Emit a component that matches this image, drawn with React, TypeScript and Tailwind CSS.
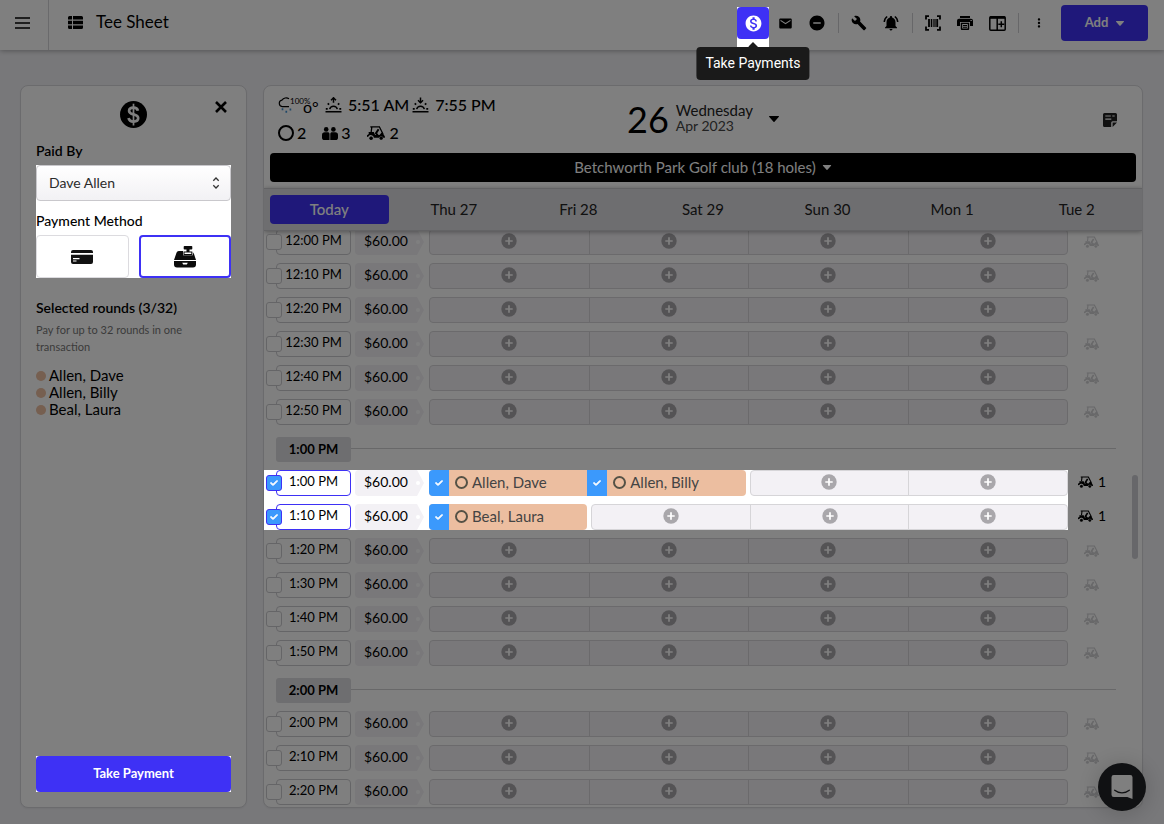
import { useState } from "react";
import type { ReactNode } from "react";
import {
  MdEmail,
  MdDoNotDisturbOn,
  MdBuild,
  MdNotificationsActive,
  MdMoreVert,
  MdMonetizationOn,
} from "react-icons/md";
import { FaCheck } from "react-icons/fa6";

type IconProps = { className?: string };

function ListIcon({ className }: IconProps) {
  return (
    <svg viewBox="0 0 15 13" className={className} fill="currentColor" aria-hidden="true">
      <path d="M1.5 0H4v3.6H0V1.5A1.5 1.5 0 0 1 1.5 0ZM5 0h8.500A1.500 1.500 0 0 1 15 1.500V3.600H5ZM0 4.700h4v3.600H0ZM5 4.700h10v3.600H5ZM0 9.400h4V13H1.500A1.500 1.500 0 0 1 0 11.500ZM5 9.400h10v2.100a1.500 1.500 0 0 1-1.500 1.500H5Z" />
    </svg>
  );
}

function CloseIcon({ className }: IconProps) {
  return (
    <svg viewBox="0 0 12 12" className={className} fill="none" stroke="#000" strokeWidth="2.600" aria-hidden="true">
      <path d="m1 1 10 10M11 1 1 11" />
    </svg>
  );
}

function BarcodeIcon({ className }: IconProps) {
  return (
    <svg viewBox="0 0 16 16" className={className} fill="none" stroke="currentColor" aria-hidden="true">
      <path strokeWidth="1.800" d="M1 4.500V1.200h3M12 1.200h3v3.300M15 11.500v3.300h-3M4 14.800H1v-3.300" />
      <path strokeWidth="1.800" d="M4 4v8M12.200 4v8" />
      <path strokeWidth="1.200" d="M6.400 4v8M10 4v8" />
      <path strokeWidth="0.900" d="M8.200 4v8" />
    </svg>
  );
}

function PrinterIcon({ className }: IconProps) {
  return (
    <svg viewBox="0 0 16 14" className={className} aria-hidden="true">
      <g fill="currentColor">
        <path d="M3 0h10v2H3z" />
        <path fillRule="evenodd" d="M2 2.800h12a2 2 0 0 1 2 2V10h-3V6H3v4H0V4.800a2 2 0 0 1 2-2Zm11.500 1.100v1.200h1.300V3.900Z" />
        <path fillRule="evenodd" d="M3.800 6.800h8.400V13a1 1 0 0 1-1 1H4.800a1 1 0 0 1-1-1Zm1.400 1.200v4.600h5.600V8Z" />
        <path d="M6 8.900h4v1H6zM6 10.700h4v1H6z" />
      </g>
    </svg>
  );
}

function ColumnPlusIcon({ className }: IconProps) {
  return (
    <svg viewBox="0 0 17 15" className={className} fill="none" stroke="currentColor" aria-hidden="true">
      <rect x="0.800" y="0.800" width="15.400" height="13.400" rx="1" strokeWidth="1.500" />
      <path strokeWidth="2.400" d="M1 1.600h15" />
      <path strokeWidth="1.500" d="M8.200 1v13M12.300 5.200v6M9.300 8.200h6" />
    </svg>
  );
}

function DollarBadge({ className }: IconProps) {
  return (
    <svg viewBox="0 0 27 27" className={className} aria-hidden="true">
      <circle cx="13.500" cy="13.500" r="13.500" fill="#000" />
      <path
        d="M17.900 9.700c-.5-2.100-2-3.100-4.400-3.100-2.600 0-4.400 1.300-4.400 3.300 0 4.500 9.100 2.500 9.100 7.200 0 2.200-1.900 3.500-4.700 3.500s-4.500-1.200-4.900-3.600"
        fill="none"
        stroke="#fff"
        strokeWidth="2.700"
      />
      <path d="M13.500 2.700v21.800" stroke="#fff" strokeWidth="1.700" />
    </svg>
  );
}

function CardIcon({ className }: IconProps) {
  return (
    <svg viewBox="0 0 22 14" className={className} aria-hidden="true">
      <path fill="#111" d="M2 0h18a2 2 0 0 1 2 2v1H0V2a2 2 0 0 1 2-2ZM0 4.800h22V12a2 2 0 0 1-2 2H2a2 2 0 0 1-2-2Z" />
      <path stroke="#fff" strokeWidth="1.200" d="M2 8.600h6.500M2 11h3.500" />
    </svg>
  );
}

function RegisterIcon({ className }: IconProps) {
  return (
    <svg viewBox="0 0 22 22" className={className} aria-hidden="true">
      <g fill="#0b0b0b">
        <path d="M10.500 0h7a.8.8 0 0 1 .8.800v2a.8.8 0 0 1-.8.800H15.500V6h-3V3.600h-2a.8.8 0 0 1-.8-.8v-2a.8.8 0 0 1 .8-.8Z" />
        <path fillRule="evenodd" d="M4.800 5H9v4.300h9.800V6l1.200 2 2 6H0L2.500 6.800A2.500 2.500 0 0 1 4.800 5Z" />
        <path fillRule="evenodd" d="M9.500 5.500h8.800v3.400H9.500Zm1 1v1.400h6.800V6.500Z" />
        <path fillRule="evenodd" d="M0 15h22v3.500a3 3 0 0 1-3 3H3a3 3 0 0 1-3-3Zm8.200 1.800 1 1.600h3.600l1-1.600Z" />
      </g>
    </svg>
  );
}

function CartIcon({ className }: IconProps) {
  return (
    <svg viewBox="0 0 18 14" className={className} fill="none" stroke="currentColor" aria-hidden="true">
      <path strokeWidth="1.300" d="M3.300.900H13M4.800 1.200 4.200 6M12.600 1.200 16 8" />
      <path strokeWidth="2" d="M11.600 3.300 9 7.300l2 2.500" />
      <path
        fill="currentColor"
        stroke="none"
        d="M1.600 6h5.200l1.300 2.900h4.400l1.900-2.200h1.200L17.900 10.500v1.200h-1.600a2.200 2.200 0 0 0-4.200 0H6.900A2.900 2.900 0 0 0 1.500 10.600L0 11V9.200l1.800-1.300Z"
      />
      <circle cx="4.100" cy="12.200" r="1.500" fill="currentColor" strokeWidth="0.600" />
      <circle cx="14.200" cy="12.200" r="1.400" fill="currentColor" strokeWidth="0.600" />
    </svg>
  );
}

function PeopleIcon({ className }: IconProps) {
  return (
    <svg viewBox="0 0 16 13" className={className} fill="currentColor" aria-hidden="true">
      <circle cx="4.200" cy="2.400" r="2.300" />
      <circle cx="11.400" cy="2.400" r="2.300" />
      <path d="M2.800 5.200h2.900c1 0 1.800.7 1.800 1.700V13H2.600A2.600 2.600 0 0 1 0 10.400V8a2.800 2.800 0 0 1 2.800-2.800ZM10 5.200h3.200A2.800 2.800 0 0 1 16 8v2.400A2.600 2.600 0 0 1 13.400 13H8.300V6.900c0-1 .7-1.700 1.700-1.700Z" />
    </svg>
  );
}

function SunIcon({ className, down = false }: IconProps & { down?: boolean }) {
  return (
    <svg viewBox="0 0 17 16" className={className} fill="none" stroke="currentColor" aria-hidden="true">
      <path strokeWidth="1.600" d="M.5 14.800h16" />
      <path strokeWidth="1.500" d="M4.700 12.200a3.900 3.900 0 0 1 7.600 0M8.500.5v5.200" />
      <path strokeWidth="1.500" d={down ? "M6 3.300 8.500 5.700 11 3.300" : "M6 3.200 8.500.9 11 3.200"} />
      <path strokeWidth="1.700" d="M.8 11.800h1.900M14.300 11.800h1.900M2.700 6.300l1.400 1.400M14.300 6.300l-1.400 1.400" />
    </svg>
  );
}

function RainCloud({ className }: IconProps) {
  return (
    <svg viewBox="0 0 18 17" className={className} fill="none" aria-hidden="true">
      <path
        stroke="currentColor"
        strokeWidth="1.200"
        d="M11 9.700H4.200a3.300 3.300 0 0 1-.3-6.500A5 5 0 0 1 11 1.800"
      />
      <path stroke="#3e8fd0" strokeWidth="1.700" d="M4.500 11.300v2M8.300 13.800v2M12.400 11.500v2" />
    </svg>
  );
}

function NoteIcon({ className }: IconProps) {
  return (
    <svg viewBox="0 0 14 14" className={className} aria-hidden="true">
      <path fill="#222" d="M1.500 0h11A1.500 1.500 0 0 1 14 1.500V8.200H9.700A1.500 1.500 0 0 0 8.200 9.700V14H1.500A1.500 1.500 0 0 1 0 12.500v-11A1.500 1.500 0 0 1 1.500 0ZM9.600 9.600H14L9.600 14Z" />
      <path stroke="#fff" strokeWidth="1.200" d="M2.300 3h5.500M9.300 3h2.400M2.300 6.200h6" />
    </svg>
  );
}

function PlusCircle() {
  return (
    <svg viewBox="0 0 16 16" className="size-4" aria-hidden="true">
      <circle cx="8" cy="8" r="7.700" fill="#a9a7ab" />
      <path d="M8 4.300v7.400M4.300 8h7.400" stroke="#fff" strokeWidth="1.700" />
    </svg>
  );
}

function Caret({ className }: IconProps) {
  return (
    <svg viewBox="0 0 10 6" className={className} fill="currentColor" aria-hidden="true">
      <path d="M.5 0h9a.5.5 0 0 1 .4.800L5.500 5.700a.7.7 0 0 1-1 0L.1.800A.5.5 0 0 1 .5 0Z" />
    </svg>
  );
}

function ToolButton({ label, children }: { label: string; children: ReactNode }) {
  return (
    <button type="button" aria-label={label} className="flex size-8 items-center justify-center rounded-sm text-black">
      {children}
    </button>
  );
}

function ToolDivider() {
  return (
    <span className="flex w-2.5 justify-center">
      <span className="h-5 w-px bg-[#cfcfd2]" />
    </span>
  );
}

function TopBar() {
  return (
    <header className="flex h-[50px] shrink-0 items-center bg-white shadow-[0_1px_5px_rgba(0,0,0,0.3)]">
      <button
        type="button"
        aria-label="Menu"
        className="flex h-full w-[49px] items-center border-r border-[#d4d4d8] pb-1 pl-[15px]"
      >
        <svg viewBox="0 0 15 12" className="h-3 w-[15px]" stroke="#000" strokeWidth="1.700" aria-hidden="true">
          <path d="M0 1h15M0 6h15M0 11h15" />
        </svg>
      </button>
      <div className="flex items-center gap-[13px] pb-1.5 pl-[19px]">
        <ListIcon className="h-[13px] w-[15px]" />
        <h1 className="text-[17px] leading-6">Tee Sheet</h1>
      </div>
      <div className="ml-auto flex items-center pr-4 pb-1">
        <div className="relative z-20 h-8 w-8">
          <div className="absolute top-0 left-0 h-10 w-8 bg-white">
            <button
              type="button"
              aria-label="Payments"
              aria-describedby="pay-tip"
              className="flex size-8 items-center justify-center rounded-sm bg-[#3e31f5] text-white"
            >
              <MdMonetizationOn className="size-[19px]" />
            </button>
          </div>
          <div
            id="pay-tip"
            role="tooltip"
            className="absolute top-10 left-1/2 -translate-x-1/2 rounded-sm bg-[#1a1a1a] px-[9px] py-1.5 font-['Roboto',sans-serif] text-sm leading-[21px] whitespace-nowrap text-white"
          >
            Take Payments
            <span className="absolute -top-[5px] left-1/2 h-[5px] w-2.5 -translate-x-1/2 bg-[#1a1a1a] [clip-path:polygon(50%_0,100%_100%,0_100%)]" />
          </div>
        </div>
        <ToolButton label="Messages"><MdEmail className="size-[15px]" /></ToolButton>
        <ToolButton label="Block times"><MdDoNotDisturbOn className="size-[18px]" /></ToolButton>
        <ToolDivider />
        <ToolButton label="Tools"><MdBuild className="size-4" /></ToolButton>
        <ToolButton label="Alerts"><MdNotificationsActive className="size-[18px]" /></ToolButton>
        <ToolDivider />
        <ToolButton label="Scan barcode"><BarcodeIcon className="size-4" /></ToolButton>
        <ToolButton label="Print"><PrinterIcon className="h-3.5 w-4" /></ToolButton>
        <ToolButton label="Add column"><ColumnPlusIcon className="h-[15px] w-[17px]" /></ToolButton>
        <ToolDivider />
        <ToolButton label="More"><MdMoreVert className="size-3.5" /></ToolButton>
        <button
          type="button"
          className="ml-1.5 flex h-9 w-[87px] items-center justify-center gap-2 rounded-sm bg-[#3e31f5] text-[13px] font-bold text-white"
        >
          Add
          <Caret className="h-[5px] w-2" />
        </button>
      </div>
    </header>
  );
}

const players = ["Allen, Dave", "Allen, Billy", "Beal, Laura"];

function PaymentPanel() {
  const [method, setMethod] = useState("cash");
  return (
    <aside className="flex w-[227px] shrink-0 flex-col rounded-lg border border-[#d6d6da] bg-white px-[15px] pt-[15px] pb-[15px] shadow-xs">
      <div className="relative flex justify-center">
        <DollarBadge className="size-[27px]" />
        <button type="button" aria-label="Close" className="absolute top-0 right-1">
          <CloseIcon className="size-3" />
        </button>
      </div>
      <label htmlFor="paid-by" className="mt-[13px] text-sm leading-5 font-semibold">
        Paid By
      </label>
      <div className="relative z-20 mt-1 bg-white">
        <div className="relative">
          <select
            id="paid-by"
            className="block h-9 w-full appearance-none rounded-sm border border-[#c9c8cc] bg-linear-to-b from-white to-[#f2f1f4] px-3 text-sm text-[#2b2b2b]"
          >
            <option>Dave Allen</option>
            <option>Billy Allen</option>
            <option>Laura Beal</option>
          </select>
          <svg
            viewBox="0 0 8 12"
            className="pointer-events-none absolute top-3 right-[11px] h-3 w-2"
            fill="none"
            stroke="#333"
            strokeWidth="1.300"
            aria-hidden="true"
          >
            <path d="M1.300 3.700 4 1l2.700 2.700M1.300 8.300 4 11l2.700-2.700" />
          </svg>
        </div>
        <fieldset>
          <legend className="pt-2.5 text-sm leading-5 font-medium">Payment Method</legend>
          <div className="mt-1 grid grid-cols-2 gap-2.5">
            {[
              { id: "card", label: "Card" },
              { id: "cash", label: "Cash register" },
            ].map((m) => (
              <label
                key={m.id}
                className="flex h-[43px] cursor-pointer items-center justify-center rounded-sm border border-[#dcdbdf] has-checked:border-2 has-checked:border-[#3e31f5]"
              >
                <input
                  type="radio"
                  name="method"
                  aria-label={m.label}
                  checked={method === m.id}
                  onChange={() => setMethod(m.id)}
                  className="sr-only"
                />
                {m.id === "card" ? (
                  <CardIcon className="h-3.5 w-[22px]" />
                ) : (
                  <RegisterIcon className="size-[22px]" />
                )}
              </label>
            ))}
          </div>
        </fieldset>
      </div>
      <h2 className="mt-5 text-sm leading-5 font-semibold">Selected rounds (3/32)</h2>
      <p className="mt-[3px] text-[11px] leading-[17px] text-[#777]">Pay for up to 32 rounds in one transaction</p>
      <ul className="mt-3 text-[15px] leading-[17px]">
        {players.map((p) => (
          <li key={p} className="flex items-center gap-[3px]">
            <span className="size-2.5 rounded-full bg-[#ecbea0]" />
            {p}
          </li>
        ))}
      </ul>
      <div className="relative z-20 mt-auto bg-white">
        <button type="button" className="h-9 w-full rounded-sm bg-[#3e31f5] text-[13px] font-bold text-white">
          Take Payment
        </button>
      </div>
    </aside>
  );
}

function SheetHeader() {
  return (
    <div className="px-1.5 pb-1.5">
      <div className="grid h-[67px] grid-cols-[1fr_auto_1fr] items-center">
        <div className="flex flex-col gap-1 self-start pt-[7px] pl-2">
          <div className="flex h-6 items-center text-base">
            <span className="relative flex h-5 w-[45px] items-center">
              <RainCloud className="h-[17px] w-[18px]" />
              <span className="absolute top-0.5 left-3 text-[8px] leading-2">100%</span>
              <span className="absolute top-[7px] left-[25px] text-base leading-2.5">o°</span>
            </span>
            <SunIcon className="ml-0.5 h-4 w-[17px]" />
            <span className="ml-1.5 font-medium">5:51 AM</span>
            <SunIcon down className="ml-[3px] h-4 w-[17px]" />
            <span className="ml-1.5 font-medium">7:55 PM</span>
          </div>
          <div className="flex h-6 items-center text-base font-medium">
            <span className="size-4 rounded-full border-2 border-black" />
            <span className="ml-[3px]">2</span>
            <PeopleIcon className="ml-4 h-[13px] w-4" />
            <span className="ml-[3px]">3</span>
            <CartIcon className="ml-4 h-3.5 w-[18px]" />
            <span className="ml-[5px]">2</span>
          </div>
        </div>
        <button type="button" className="flex items-center pb-0.5">
          <span className="text-[36px] leading-10">26</span>
          <span className="ml-[7px] flex flex-col items-start pb-0.5">
            <span className="text-[15px] leading-4 text-[#222]">Wednesday</span>
            <span className="text-sm leading-[15px] text-[#444]">Apr 2023</span>
          </span>
          <Caret className="ml-4 h-1.5 w-2.5" />
        </button>
        <button type="button" aria-label="Notes" className="justify-self-end pr-[19px]">
          <NoteIcon className="size-3.5" />
        </button>
      </div>
      <button
        type="button"
        className="flex h-[29px] w-full items-center justify-center gap-1.5 rounded-sm bg-black text-[15px] text-white"
      >
        Betchworth Park Golf club (18 holes)
        <Caret className="h-[5px] w-2.5" />
      </button>
    </div>
  );
}

const days = ["Today", "Thu 27", "Fri 28", "Sat 29", "Sun 30", "Mon 1", "Tue 2"];

function DayStrip() {
  return (
    <nav className="relative z-[1] grid grid-cols-7 border-y border-[#c6c6ca] bg-[#dcdce0] px-[3px] py-1.5 shadow-[0_1px_5px_rgba(0,0,0,0.35)]">
      {days.map((d, i) => (
        <button
          key={d}
          type="button"
          className={
            i === 0
              ? "mx-[3px] h-[29px] rounded-sm bg-[#3e31f5] text-[15px] font-medium text-white"
              : "mx-[3px] h-[29px] text-[15px] text-[#222]"
          }
        >
          {d}
        </button>
      ))}
    </nav>
  );
}

function PlayerCell({ name }: { name: string }) {
  return (
    <div className="flex h-full flex-1 basis-0 items-center overflow-hidden bg-[#ecbea0] text-[#444] first:rounded-l-sm last:rounded-r-sm">
      <span className="relative flex h-full w-5 items-center justify-center">
        <input
          type="checkbox"
          aria-label={"Select " + name}
          defaultChecked
          className="absolute inset-0 m-0 size-full appearance-none bg-[#3b99fc]"
        />
        <FaCheck className="pointer-events-none relative size-2 stroke-white stroke-[60] text-white" />
      </span>
      <span className="flex items-center gap-1 pb-0.5 pl-1.5">
        <span className="size-[13px] rounded-full border-2 border-[#555246]" />
        <span className="text-[15px] leading-5">{name}</span>
      </span>
    </div>
  );
}

type TeeRow = { time: string; names?: string[] };

function TeeTime({ row }: { row: TeeRow }) {
  const names = row.names ?? [];
  const picked = names.length > 0;
  const open = 4 - names.length;
  return (
    <div className="flex h-[26px] items-center pl-0.5">
      <span className="relative z-[1] -mr-1.5 flex size-4 items-center justify-center">
        <input
          type="checkbox"
          aria-label={"Select " + row.time}
          defaultChecked={picked}
          className="absolute inset-0 m-0 size-full appearance-none rounded-[3px] border border-[#cbcace] bg-white checked:border-[#3e31f5] checked:bg-[#3b99fc]"
        />
        {picked && <FaCheck className="pointer-events-none relative size-2 stroke-white stroke-[60] text-white" />}
      </span>
      <button
        type="button"
        className={
          picked
            ? "h-full w-[75px] rounded-sm border border-[#3e31f5] bg-white pb-0.5 text-[13px]"
            : "h-full w-[75px] rounded-sm border border-[#cbcace] bg-white pb-0.5 text-[13px]"
        }
      >
        {row.time}
      </button>
      <span className="ml-1 flex h-full w-[69px] items-center justify-between rounded-sm bg-[#f3f1f5] pr-1 pl-[9px] text-sm [clip-path:polygon(0_0,62px_0,100%_50%,62px_100%,0_100%)]">
        <span className="pb-0.5">$60.00</span>
        <span className="size-1 rounded-full bg-white" />
      </span>
      <div className="ml-[5px] flex h-full flex-1">
        {picked && (
          <div className="mr-1 flex h-full" style={{ flex: `${names.length} 1 0px` }}>
            {names.map((n) => (
              <PlayerCell key={n} name={n} />
            ))}
          </div>
        )}
        <div
          className="flex h-full divide-x divide-[#d6d5d8] rounded-sm border border-[#d6d5d8] bg-[#f3f1f5]"
          style={{ flex: `${open} 1 0px` }}
        >
          {Array.from({ length: open }, (_, i) => (
            <button
              key={i}
              type="button"
              aria-label={"Add player at " + row.time}
              className="flex flex-1 basis-0 items-center justify-center pb-0.5"
            >
              <PlusCircle />
            </button>
          ))}
        </div>
      </div>
    </div>
  );
}

function TeeBlock({ rows, selected = false }: { rows: TeeRow[]; selected?: boolean }) {
  return (
    <div className="mb-2 flex">
      <div className={selected ? "relative z-20 flex flex-1 flex-col gap-2 bg-white" : "flex flex-1 flex-col gap-2"}>
        {rows.map((r) => (
          <TeeTime key={r.time} row={r} />
        ))}
      </div>
      <div className="flex w-[74px] flex-col gap-2">
        {rows.map((r) =>
          selected ? (
            <span key={r.time} className="flex h-[26px] items-center gap-[5px] pb-0.5 pl-2.5 text-sm">
              <CartIcon className="h-3 w-[15px]" />1
            </span>
          ) : (
            <span key={r.time} className="flex h-[26px] items-center pl-4 text-[#d0d0d3]">
              <CartIcon className="h-3 w-[15px]" />
            </span>
          ),
        )}
      </div>
    </div>
  );
}

function HourHeading({ label }: { label: string }) {
  return (
    <div className="mt-3 mb-2 mr-[26px] ml-3 flex h-[25px] items-center">
      <h3 className="flex h-full w-[75px] items-center justify-center rounded-[3px] bg-[#dcdce0] text-[13px] font-bold">
        {label}
      </h3>
      <span className="mb-0.5 h-px flex-1 bg-[#d0d0d3]" />
    </div>
  );
}

const noon: TeeRow[] = ["12:00 PM", "12:10 PM", "12:20 PM", "12:30 PM", "12:40 PM", "12:50 PM"].map((time) => ({ time }));
const booked: TeeRow[] = [
  { time: "1:00 PM", names: ["Allen, Dave", "Allen, Billy"] },
  { time: "1:10 PM", names: ["Beal, Laura"] },
];
const one: TeeRow[] = ["1:20 PM", "1:30 PM", "1:40 PM", "1:50 PM"].map((time) => ({ time }));
const two: TeeRow[] = ["2:00 PM", "2:10 PM", "2:20 PM"].map((time) => ({ time }));

function TeeSheet() {
  return (
    <main className="flex min-w-0 flex-1 flex-col overflow-hidden rounded-lg border border-[#d6d6da] bg-white shadow-xs">
      <SheetHeader />
      <DayStrip />
      <div className="relative flex-1 overflow-hidden">
        <div className="-mt-0.5 flex flex-col">
          <TeeBlock rows={noon} />
          <div className="-mt-2">
            <HourHeading label="1:00 PM" />
          </div>
          <TeeBlock rows={booked} selected />
          <TeeBlock rows={one} />
          <div className="-mt-2">
            <HourHeading label="2:00 PM" />
          </div>
          <TeeBlock rows={two} />
        </div>
        <span className="absolute top-[244px] right-1 h-[84px] w-1.5 rounded-full bg-[#cfcfd4]" />
      </div>
    </main>
  );
}

export default function App() {
  return (
    <div className="flex h-screen flex-col overflow-hidden bg-[#f1f1f5] font-['Lato',sans-serif] text-black">
      <TopBar />
      <div className="flex min-h-0 flex-1 gap-4 pt-[35px] pr-[21px] pb-4 pl-5">
        <PaymentPanel />
        <TeeSheet />
      </div>
      <button
        type="button"
        aria-label="Open chat"
        className="fixed right-[18px] bottom-[13px] z-[2] flex size-12 items-center justify-center rounded-full bg-[#202226] shadow-[0_2px_24px_rgba(0,0,0,0.2)]"
      >
        <svg viewBox="0 0 22 24" className="h-6 w-[22px]" aria-hidden="true">
          <path fill="#fff" d="M2.800 0h16.400A2.300 2.300 0 0 1 21.500 2.300V24l-5.200-2H2.800A2.300 2.300 0 0 1 .5 19.700V2.300A2.300 2.300 0 0 1 2.800 0Z" />
          <path fill="none" stroke="#202226" strokeWidth="1.300" strokeLinecap="round" d="M3.700 15.200c4.200 3.500 10.400 3.500 14.600 0" />
        </svg>
      </button>
      <div className="pointer-events-none fixed inset-0 z-10 bg-black/50" />
    </div>
  );
}
